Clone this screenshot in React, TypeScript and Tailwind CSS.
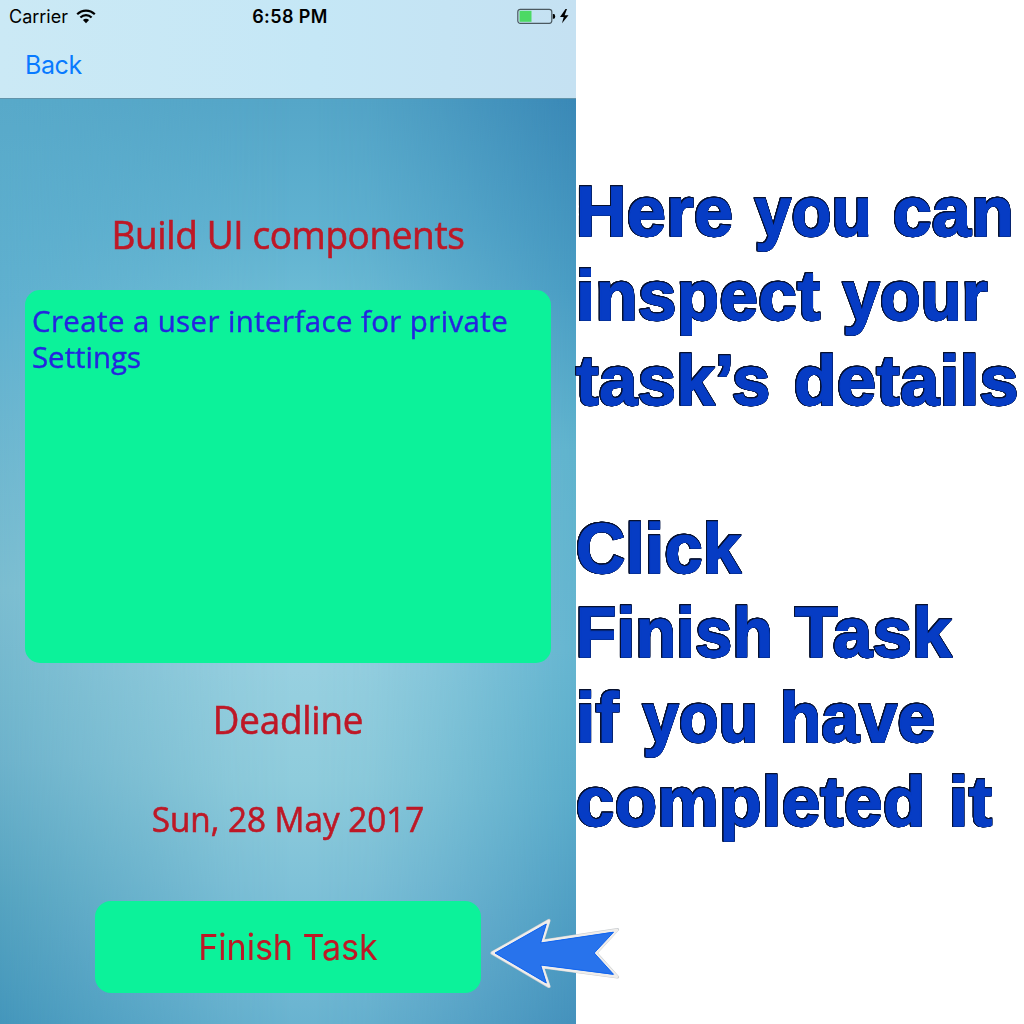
type Word = { text: string; fit: string };

const captionLines: Word[][] = [
  [
    { text: 'Here', fit: 'w-[179px] scale-x-[1]' },
    { text: 'you', fit: 'w-[138px] scale-x-[0.93]' },
    { text: 'can', fit: 'scale-x-[0.995]' },
  ],
  [
    { text: 'inspect', fit: 'w-[267px] scale-x-[0.985]' },
    { text: 'your', fit: 'scale-x-[0.945]' },
  ],
  [
    { text: 'task’s', fit: 'w-[218px] scale-x-[0.98]' },
    { text: 'details', fit: 'scale-x-[1]' },
  ],
  [],
  [{ text: 'Click', fit: 'scale-x-[0.975]' }],
  [
    { text: 'Finish', fit: 'w-[219px] scale-x-[0.945]' },
    { text: 'Task', fit: 'scale-x-[1.005]' },
  ],
  [
    { text: 'if', fit: 'w-[67px] scale-x-[0.99]' },
    { text: 'you', fit: 'w-[137px] scale-x-[0.92]' },
    { text: 'have', fit: 'scale-x-[0.965]' },
  ],
  [
    { text: 'completed', fit: 'w-[373px] scale-x-[0.987]' },
    { text: 'it', fit: 'scale-x-[1]' },
  ],
];

function WifiIcon() {
  return (
    <svg className="ml-[8px] h-[15px] w-[20px]" viewBox="0 0 20 15" fill="none" stroke="#000" strokeWidth="2.2">
      <path d="M1.2 5.2C6.2 .3 13.8 .3 18.8 5.2" />
      <path d="M4.4 8.5C7.6 5.4 12.4 5.4 15.6 8.5" />
      <path d="M10 14.2 6.9 11C8.6 9.4 11.4 9.4 13.1 11Z" fill="#000" stroke="none" />
    </svg>
  );
}

function BatteryIcon() {
  return (
    <svg className="h-[17px] w-[54px]" viewBox="0 0 54 17" fill="none">
      <rect x="0.8" y="1.3" width="34" height="14" rx="2.5" stroke="#4b5960" strokeWidth="1.2" />
      <rect x="2.5" y="2.8" width="12" height="11" fill="#4cd964" />
      <path d="M35.8 6h.8q1.6 0 1.6 2.4t-1.6 2.4h-.8z" fill="#000" />
      <path d="M48.5 1 43 9h3.7L45 15.2 51.5 7.3H47.6L50 1Z" fill="#000" />
    </svg>
  );
}

function Arrow() {
  return (
    <svg className="absolute left-[488px] top-[915px] h-[76px] w-[136px]" viewBox="488 915 136 76">
      <path
        d="M492 953 549 920.5 542.5 941 617.5 929.5 596 953 617.5 977 542.5 967 549 986.5Z"
        fill="#2873ec"
        stroke="#c9cdd0"
        strokeWidth="3.2"
        strokeLinejoin="round"
      />
      <path
        d="M492.5 953 548.7 921 542.3 941.4 617 930 595.7 953 617 976.6 542.3 966.6 548.7 986Z"
        fill="#2873ec"
        stroke="#efedeb"
        strokeWidth="2.6"
        strokeLinejoin="round"
      />
      <path d="M495 953 546.3 924 540.6 943 613.5 932.2 594.2 953 613.5 974.3 540.6 965 546.3 983Z" fill="#2873ec" stroke="#1265ef" />
    </svg>
  );
}

export default function App() {
  return (
    <div className="relative flex h-[1024px] w-[1024px] overflow-hidden bg-white">
      <main className="relative isolate flex h-[1024px] w-[576px] shrink-0 flex-col bg-[linear-gradient(180deg,#55a6c8_100px,#60b2d1_230px,#6bbad4_290px,#8ccadc_500px,#97d0e0_670px,#8fccdc_780px,#80c2d8_880px,#69b3d0_1024px)] pb-[31px]">
        <div className="absolute inset-y-0 left-0 -z-10 w-[290px] bg-[linear-gradient(180deg,#58a9c9_100px,#5fb0cf_300px,#7bbdd0_590px,#6db2cb_760px,#55a3c0_900px,#4496bb_1024px)] [mask-image:linear-gradient(90deg,#000_0%,rgba(0,0,0,.72)_25%,rgba(0,0,0,.4)_55%,rgba(0,0,0,.12)_80%,transparent_100%)]" />
        <div className="absolute inset-y-0 right-0 -z-10 w-[260px] bg-[linear-gradient(180deg,#3a88b6_100px,#499cc3_290px,#5fb3cd_450px,#65b5d0_650px,#5aabca_800px,#4491bc_1024px)] [mask-image:linear-gradient(270deg,#000_0%,rgba(0,0,0,.7)_25%,rgba(0,0,0,.35)_55%,rgba(0,0,0,.1)_80%,transparent_100%)]" />
        <header className="h-[99px] shrink-0 border-b border-[#6294aa] bg-[linear-gradient(90deg,#cbe9f5,#c5e7f6_55%,#c5e1f2)] font-[Inter,sans-serif]">
          <div className="grid h-8 grid-cols-3 items-center pl-[9px] pr-[5px]">
            <div className="flex items-center text-[18px] text-black">
              <span>Carrier</span>
              <WifiIcon />
            </div>
            <time className="text-center text-[18px] font-semibold tracking-[0.4px] text-black">6:58 PM</time>
            <div className="flex justify-end">
              <BatteryIcon />
            </div>
          </div>
          <button className="ml-[25px] mt-[15px] block text-[25px] leading-[36px] tracking-[-0.4px] text-[#087aff]">Back</button>
        </header>
        <h1 className="mt-[109px] scale-x-[0.96] text-center font-['Open_Sans',sans-serif] text-[38.5px] leading-[52px] tracking-[-0.4px] text-[#be1826] [-webkit-text-stroke:0.6px_#be1826]">
          Build UI components
        </h1>
        <section className="mx-[25px] mt-[30px] h-[373px] shrink-0 rounded-[15px] bg-[#0cf29a] px-[7px] pt-[13px] font-['Open_Sans',sans-serif] text-[30px] leading-[36px] text-[#2525df]">
          <p className="origin-left scale-x-[0.98] whitespace-nowrap [-webkit-text-stroke:0.4px_#2525df]">
            <span className="tracking-[0.42px]">Create a user interface for private</span>
            <br />
            Settings
          </p>
        </section>
        <h2 className="mt-[30px] scale-x-[0.954] text-center font-['Open_Sans',sans-serif] text-[38.5px] leading-[52px] tracking-[-0.2px] text-[#be1826] [-webkit-text-stroke:0.6px_#be1826]">
          Deadline
        </h2>
        <p className="mt-[50px] scale-x-[0.95] text-center font-['Open_Sans',sans-serif] text-[35px] leading-[48px] text-[#be1826] [-webkit-text-stroke:0.6px_#be1826]">
          Sun, 28 May 2017
        </p>
        <button className="ml-[95px] mt-auto h-[92px] w-[386px] shrink-0 rounded-[16px] bg-[#0cf29a] font-[Inter,sans-serif] text-[36px] text-[#be1826]">
          <span className="inline-block scale-x-[0.945]">Finish Task</span>
        </button>
      </main>
      <aside className="w-[448px] shrink-0 pt-[170px] font-['Liberation_Sans',Arial,sans-serif] text-[70px] font-bold leading-[84.3px] tracking-[0.5px] text-[#063cc4]">
        {captionLines.map((words, i) => (
          <p key={i} className="flex h-[84.3px] whitespace-nowrap">
            {words.map((word) => (
              <span
                key={word.text}
                className={`block origin-left [-webkit-text-stroke:1.4px_#063cc4] [filter:drop-shadow(0.7px_0_0_#07112f)_drop-shadow(-0.7px_0_0_#07112f)_drop-shadow(0_0.7px_0_#07112f)_drop-shadow(0_-0.7px_0_#07112f)] ${word.fit}`}
              >
                {word.text}
              </span>
            ))}
          </p>
        ))}
      </aside>
      <Arrow />
    </div>
  );
}
